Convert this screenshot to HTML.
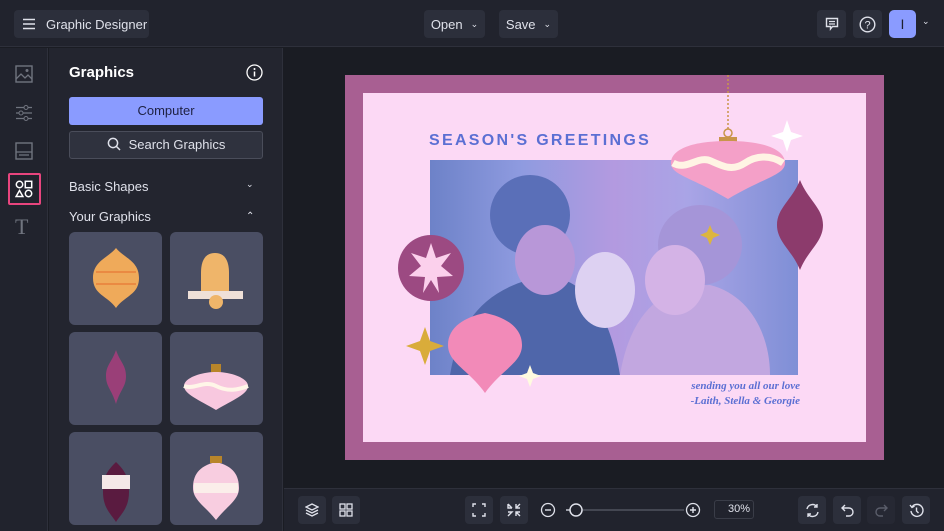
<!DOCTYPE html>
<html><head><meta charset="utf-8"><style>
*{margin:0;padding:0;box-sizing:border-box}
body{width:944px;height:531px;overflow:hidden;background:#1a1c23;font-family:"Liberation Sans",sans-serif;color:#e6e7ee;position:relative}
.abs{position:absolute}
.btn{position:absolute;background:#2c2f3b;border-radius:4px;color:#dfe1ea;font-size:13px;display:flex;align-items:center;justify-content:center}
.tile{position:absolute;width:93px;height:93px;background:#4a4e63;border-radius:6px}
</style></head><body>
<!-- top bar -->
<div class="abs" style="left:0;top:0;width:944px;height:47px;background:#21232d;border-bottom:1px solid #2e303b"></div>
<div class="btn" style="left:14px;top:10px;width:135px;height:28px;justify-content:flex-start;padding-left:8px">
<svg width="14" height="12" viewBox="0 0 14 12"><path d="M1 1.5h12M1 6h12M1 10.5h12" stroke="#dfe1ea" stroke-width="1.6"/></svg><span style="margin-left:10px">Graphic Designer</span></div>
<div class="btn" style="left:424px;top:10px;width:61px;height:28px">Open <span style="font-size:9px;margin-left:8px">&#8964;</span></div>
<div class="btn" style="left:499px;top:10px;width:59px;height:28px">Save <span style="font-size:9px;margin-left:8px">&#8964;</span></div>
<div class="btn" style="left:817px;top:10px;width:29px;height:28px"><svg width="14" height="14" viewBox="0 0 14 14"><path d="M1.5 1.5h11v8h-5l-2 2.5v-2.5h-4z" fill="none" stroke="#dfe1ea" stroke-width="1.4"/><path d="M4 4.5h6M4 7h6" stroke="#dfe1ea" stroke-width="1.2"/></svg></div>
<div class="btn" style="left:853px;top:10px;width:29px;height:28px"><svg width="17" height="17" viewBox="0 0 17 17"><circle cx="8.5" cy="8.5" r="7.3" fill="none" stroke="#dfe1ea" stroke-width="1.4"/><text x="8.5" y="12.5" font-size="11" text-anchor="middle" fill="#dfe1ea" font-family="Liberation Sans">?</text></svg></div>
<div class="abs" style="left:889px;top:10px;width:27px;height:28px;background:#8a9bff;border-radius:5px;color:#1e2030;font-size:14px;text-align:center;line-height:28px">I</div>
<div class="abs" style="left:922px;top:16px;font-size:9px;color:#dfe1ea">&#8964;</div>
<!-- left icon col -->
<div class="abs" style="left:0;top:48px;width:48px;height:483px;background:#21232d;border-right:1px solid #2e303b"></div>
<svg class="abs" style="left:15px;top:65px" width="18" height="18" viewBox="0 0 18 18"><rect x="1" y="1" width="16" height="16" fill="none" stroke="#70747f" stroke-width="1.4"/><path d="M1 14l5-5 4 4 3-3 4 4" fill="none" stroke="#70747f" stroke-width="1.3"/><circle cx="12" cy="5.5" r="1.5" fill="#70747f"/></svg>
<svg class="abs" style="left:15px;top:104px" width="18" height="18" viewBox="0 0 18 18"><path d="M1 3.5h16M1 9h16M1 14.5h16" stroke="#70747f" stroke-width="1.3"/><circle cx="11" cy="3.5" r="2" fill="#21232d" stroke="#70747f"/><circle cx="6" cy="9" r="2" fill="#21232d" stroke="#70747f"/><circle cx="11" cy="14.5" r="2" fill="#21232d" stroke="#70747f"/></svg>
<svg class="abs" style="left:15px;top:142px" width="18" height="18" viewBox="0 0 18 18"><rect x="1" y="1" width="16" height="16" fill="none" stroke="#70747f" stroke-width="1.4"/><path d="M1 10h16M4 13h10" stroke="#70747f" stroke-width="1.3"/></svg>
<div class="abs" style="left:8px;top:173px;width:33px;height:32px;border:2px solid #e8457e;border-radius:2px"></div>
<svg class="abs" style="left:15px;top:180px" width="18" height="18" viewBox="0 0 18 18"><circle cx="4.5" cy="4.5" r="3.2" fill="none" stroke="#fff" stroke-width="1.5"/><rect x="10.3" y="1.3" width="6.4" height="6.4" fill="none" stroke="#fff" stroke-width="1.5"/><path d="M4.5 10.5l3.4 6h-6.8z" fill="none" stroke="#fff" stroke-width="1.5"/><circle cx="13.5" cy="13.5" r="3.2" fill="none" stroke="#fff" stroke-width="1.5"/></svg>
<div class="abs" style="left:15px;top:214px;font-family:'Liberation Serif',serif;font-size:22px;color:#70747f">T</div>
<!-- panel -->
<div class="abs" style="left:49px;top:48px;width:234px;height:483px;background:#23252f;border-right:1px solid #2e303b"></div>
<div class="abs" style="left:69px;top:64px;font-size:15px;font-weight:bold;color:#fff">Graphics</div>
<svg class="abs" style="left:246px;top:64px" width="17" height="17" viewBox="0 0 17 17"><circle cx="8.5" cy="8.5" r="7.5" fill="none" stroke="#fff" stroke-width="1.3"/><path d="M8.5 7.5v5" stroke="#fff" stroke-width="1.5"/><circle cx="8.5" cy="5" r="1" fill="#fff"/></svg>
<div class="abs" style="left:69px;top:97px;width:194px;height:28px;background:#8a9bff;border-radius:3px;color:#1e2142;font-size:13px;text-align:center;line-height:28px">Computer</div>
<div class="abs" style="left:69px;top:131px;width:194px;height:28px;background:#2f323e;border:1px solid #4a4d5a;border-radius:3px;color:#dfe1ea;font-size:13px;text-align:center;line-height:26px"><svg width="14" height="14" viewBox="0 0 14 14" style="vertical-align:-2px;margin-right:8px"><circle cx="6" cy="6" r="4.6" fill="none" stroke="#dfe1ea" stroke-width="1.5"/><path d="M9.5 9.5l3.5 3.5" stroke="#dfe1ea" stroke-width="1.5"/></svg>Search Graphics</div>
<div class="abs" style="left:69px;top:179px;font-size:13px;color:#dfe1ea">Basic Shapes</div>
<div class="abs" style="left:246px;top:179px;font-size:9px;color:#dfe1ea">&#8964;</div>
<div class="abs" style="left:69px;top:209px;font-size:13px;color:#dfe1ea">Your Graphics</div>
<div class="abs" style="left:246px;top:211px;font-size:10px;color:#dfe1ea">&#8963;</div>
<div class="tile" style="left:69px;top:232px"></div>
<div class="tile" style="left:170px;top:232px"></div>
<div class="tile" style="left:69px;top:332px"></div>
<div class="tile" style="left:170px;top:332px"></div>
<div class="tile" style="left:69px;top:432px"></div>
<div class="tile" style="left:170px;top:432px"></div>
<svg class="abs" style="left:0;top:0" width="283" height="531">
<path d="M116 248c8 10 23 13 23 30s-15 18-23 30c-8-12-23-13-23-30s15-20 23-30z" fill="#efaa5a"/>
<path d="M96 272h40M96 284h40" stroke="#e66a2a" stroke-width="1"/>
<path d="M215 253c-10 0-14 8-14 20v18h28v-18c0-12-4-20-14-20z" fill="#efb56a"/><rect x="188" y="291" width="55" height="8" fill="#efe0d8"/><circle cx="216" cy="302" r="7" fill="#efb56a"/>
<path d="M116 350c4 12 10 15 10 26s-6 14-10 28c-4-14-10-17-10-28s6-14 10-26z" fill="#9a3f78"/>
<path d="M216 372c-15 0-32 6-32 14s15 14 32 24c17-10 32-16 32-24s-17-14-32-14z" fill="#f8c8df"/><path d="M184 386c10 4 20-6 32 0s22 4 32 0" stroke="#fff6e8" stroke-width="4" fill="none"/><rect x="211" y="364" width="10" height="8" fill="#b8852a"/>
<path d="M116 462c8 8 13 14 13 30s-8 22-13 30c-5-8-13-14-13-30s5-22 13-30z" fill="#5a1b40"/><rect x="102" y="475" width="28" height="14" fill="#f5e8e8"/>
<path d="M216 462c-18 4-23 14-23 26s12 18 23 32c11-14 23-20 23-32s-5-22-23-26z" fill="#f8cde0"/><rect x="210" y="456" width="12" height="7" fill="#b8852a"/><rect x="194" y="483" width="44" height="10" fill="#fbeeea"/>
</svg>
<!-- canvas -->
<div class="abs" style="left:345px;top:75px;width:539px;height:385px;background:#a85f92"></div>
<div class="abs" style="left:363px;top:93px;width:503px;height:349px;background:#fcd9f5"></div>
<div class="abs" style="left:430px;top:160px;width:368px;height:215px;background:linear-gradient(90deg,#6d82c8 0%,#8f9be0 25%,#b39ae0 50%,#a9a4e6 70%,#7f8fd6 100%)"></div>
<svg class="abs" style="left:430px;top:160px" width="368" height="215">
<ellipse cx="100" cy="55" rx="40" ry="40" fill="#5a6fb8"/><ellipse cx="270" cy="85" rx="42" ry="40" fill="#a595d8"/>
<path d="M20 215c10-60 40-90 100-100 40 10 60 40 70 100z" fill="#4f66aa"/><path d="M190 215c10-60 40-90 90-90 40 10 60 50 60 90z" fill="#c2a7e0"/>
<ellipse cx="115" cy="100" rx="30" ry="35" fill="#b897d8"/><ellipse cx="245" cy="120" rx="30" ry="35" fill="#d4b3e6"/><ellipse cx="175" cy="130" rx="30" ry="38" fill="#ddd1f2"/>
</svg>
<div class="abs" style="left:429px;top:132px;font-family:'Liberation Sans',sans-serif;font-size:16px;font-weight:bold;letter-spacing:2.3px;color:#5b6fd3">SEASON'S GREETINGS</div>
<div class="abs" style="left:600px;top:379px;width:200px;text-align:right;font-family:'Liberation Serif',serif;font-style:italic;font-size:11px;color:#5b6fd3;line-height:15px;font-weight:bold">sending you all our love<br>-Laith, Stella &amp; Georgie</div>
<svg class="abs" style="left:345px;top:75px" width="539" height="385">
<path d="M383 0v55" stroke="#c9954a" stroke-width="1.5" stroke-dasharray="2 2"/>
<circle cx="383" cy="58" r="4" fill="none" stroke="#c9954a" stroke-width="1.5"/><rect x="374" y="62" width="18" height="6" fill="#c9954a"/>
<path d="M383 66c-40 0-57 10-57 22s20 14 57 36c37-22 57-24 57-36s-17-22-57-22z" fill="#f4a0c8"/>
<path d="M328 88c14 8 25-8 38-2s22 10 34 2 26-8 38 0" stroke="#fff4e4" stroke-width="7" fill="none"/>
<path d="M455 105c8 20 23 28 23 45s-15 25-23 45c-8-20-23-28-23-45s15-25 23-45z" fill="#8c3b6c"/>
<circle cx="86" cy="193" r="33" fill="#9c4a82"/><path d="M86 168l5 15 15-5-10 13 12 10-16 1 2 16-8-13-8 13 2-16-16-1 12-10-10-13 15 5z" fill="#fbd0ec"/>
<path d="M140 238c-20 4-37 14-37 32s20 24 37 48c17-24 37-30 37-48s-17-28-37-32z" fill="#f28ab8"/>
<path d="M80 252l5 14 14 5-14 5-5 14-5-14-14-5 14-5z" fill="#d9ac3a"/>
<path d="M442 45l4 12 12 4-12 4-4 12-4-12-12-4 12-4z" fill="#fff"/>
<path d="M365 150l3 7 7 3-7 3-3 7-3-7-7-3 7-3z" fill="#dcb540"/>
<path d="M185 290l3 8 8 3-8 3-3 8-3-8-8-3 8-3z" fill="#fffbe0"/>
</svg>
<!-- bottom bar -->
<div class="abs" style="left:284px;top:488px;width:660px;height:43px;background:#21232d;border-top:1px solid #2e303b"></div>
<div class="btn" style="left:298px;top:496px;width:28px;height:28px"><svg width="14" height="14" viewBox="0 0 14 14" fill="none" stroke="#dfe1ea" stroke-width="1.3"><path d="M7 1l6 3-6 3-6-3z"/><path d="M1 7l6 3 6-3M1 10l6 3 6-3"/></svg></div>
<div class="btn" style="left:332px;top:496px;width:28px;height:28px"><svg width="14" height="14" viewBox="0 0 14 14" fill="none" stroke="#dfe1ea" stroke-width="1.3"><rect x="1" y="1" width="5" height="5"/><rect x="8" y="1" width="5" height="5"/><rect x="1" y="8" width="5" height="5"/><rect x="8" y="8" width="5" height="5"/></svg></div>
<div class="btn" style="left:465px;top:496px;width:28px;height:28px"><svg width="14" height="14" viewBox="0 0 14 14" fill="none" stroke="#dfe1ea" stroke-width="1.4"><path d="M1 4V1h3M10 1h3v3M13 10v3h-3M4 13H1v-3"/></svg></div>
<div class="btn" style="left:500px;top:496px;width:28px;height:28px"><svg width="14" height="14" viewBox="0 0 14 14" fill="none" stroke="#dfe1ea" stroke-width="1.4"><path d="M1 1v4h4M1 1l4 4M13 1l-4 4M9 1v4h4M1 13l4-4H1M9 13V9h4M9 9l4 4"/></svg></div>
<svg class="abs" style="left:540px;top:502px" width="170" height="16"><circle cx="8" cy="8" r="6.5" fill="none" stroke="#dfe1ea" stroke-width="1.3"/><path d="M5 8h6" stroke="#dfe1ea" stroke-width="1.4"/><path d="M30 8h114" stroke="#5a5d6a" stroke-width="1.3"/><path d="M26 8h6" stroke="#dfe1ea" stroke-width="1.3"/><circle cx="36" cy="8" r="6" fill="#21232d" stroke="#dfe1ea" stroke-width="1.5"/><circle cx="153" cy="8" r="6.5" fill="none" stroke="#dfe1ea" stroke-width="1.3"/><path d="M150 8h6M153 5v6" stroke="#dfe1ea" stroke-width="1.4"/></svg>
<div class="abs" style="left:714px;top:500px;width:40px;height:19px;border:1px solid #3a3d48;border-radius:3px;color:#dfe1ea;font-size:11px;text-align:right;padding-right:3px;line-height:17px">30%</div>
<div class="btn" style="left:798px;top:496px;width:28px;height:28px"><svg width="15" height="15" viewBox="0 0 15 15" fill="none" stroke="#dfe1ea" stroke-width="1.4"><path d="M2 6a5.5 5.5 0 0 1 10-2M13 9a5.5 5.5 0 0 1-10 2M12 1v3H9M3 14v-3h3"/></svg></div>
<div class="btn" style="left:833px;top:496px;width:28px;height:28px"><svg width="15" height="15" viewBox="0 0 15 15" fill="none" stroke="#dfe1ea" stroke-width="1.4"><path d="M5 2L2 5l3 3M2 5h7a4 4 0 0 1 0 8H6"/></svg></div>
<div class="btn" style="left:867px;top:496px;width:28px;height:28px;background:#262833"><svg width="15" height="15" viewBox="0 0 15 15" fill="none" stroke="#5a5d6a" stroke-width="1.4"><path d="M10 2l3 3-3 3M13 5H6a4 4 0 0 0 0 8h3"/></svg></div>
<div class="btn" style="left:902px;top:496px;width:28px;height:28px"><svg width="15" height="15" viewBox="0 0 15 15" fill="none" stroke="#dfe1ea" stroke-width="1.4"><path d="M3 4a6 6 0 1 1-1 4M1 2l2 2.5 2.5-1.5M7.5 4.5v3.5l2 2"/></svg></div>
</body></html>
